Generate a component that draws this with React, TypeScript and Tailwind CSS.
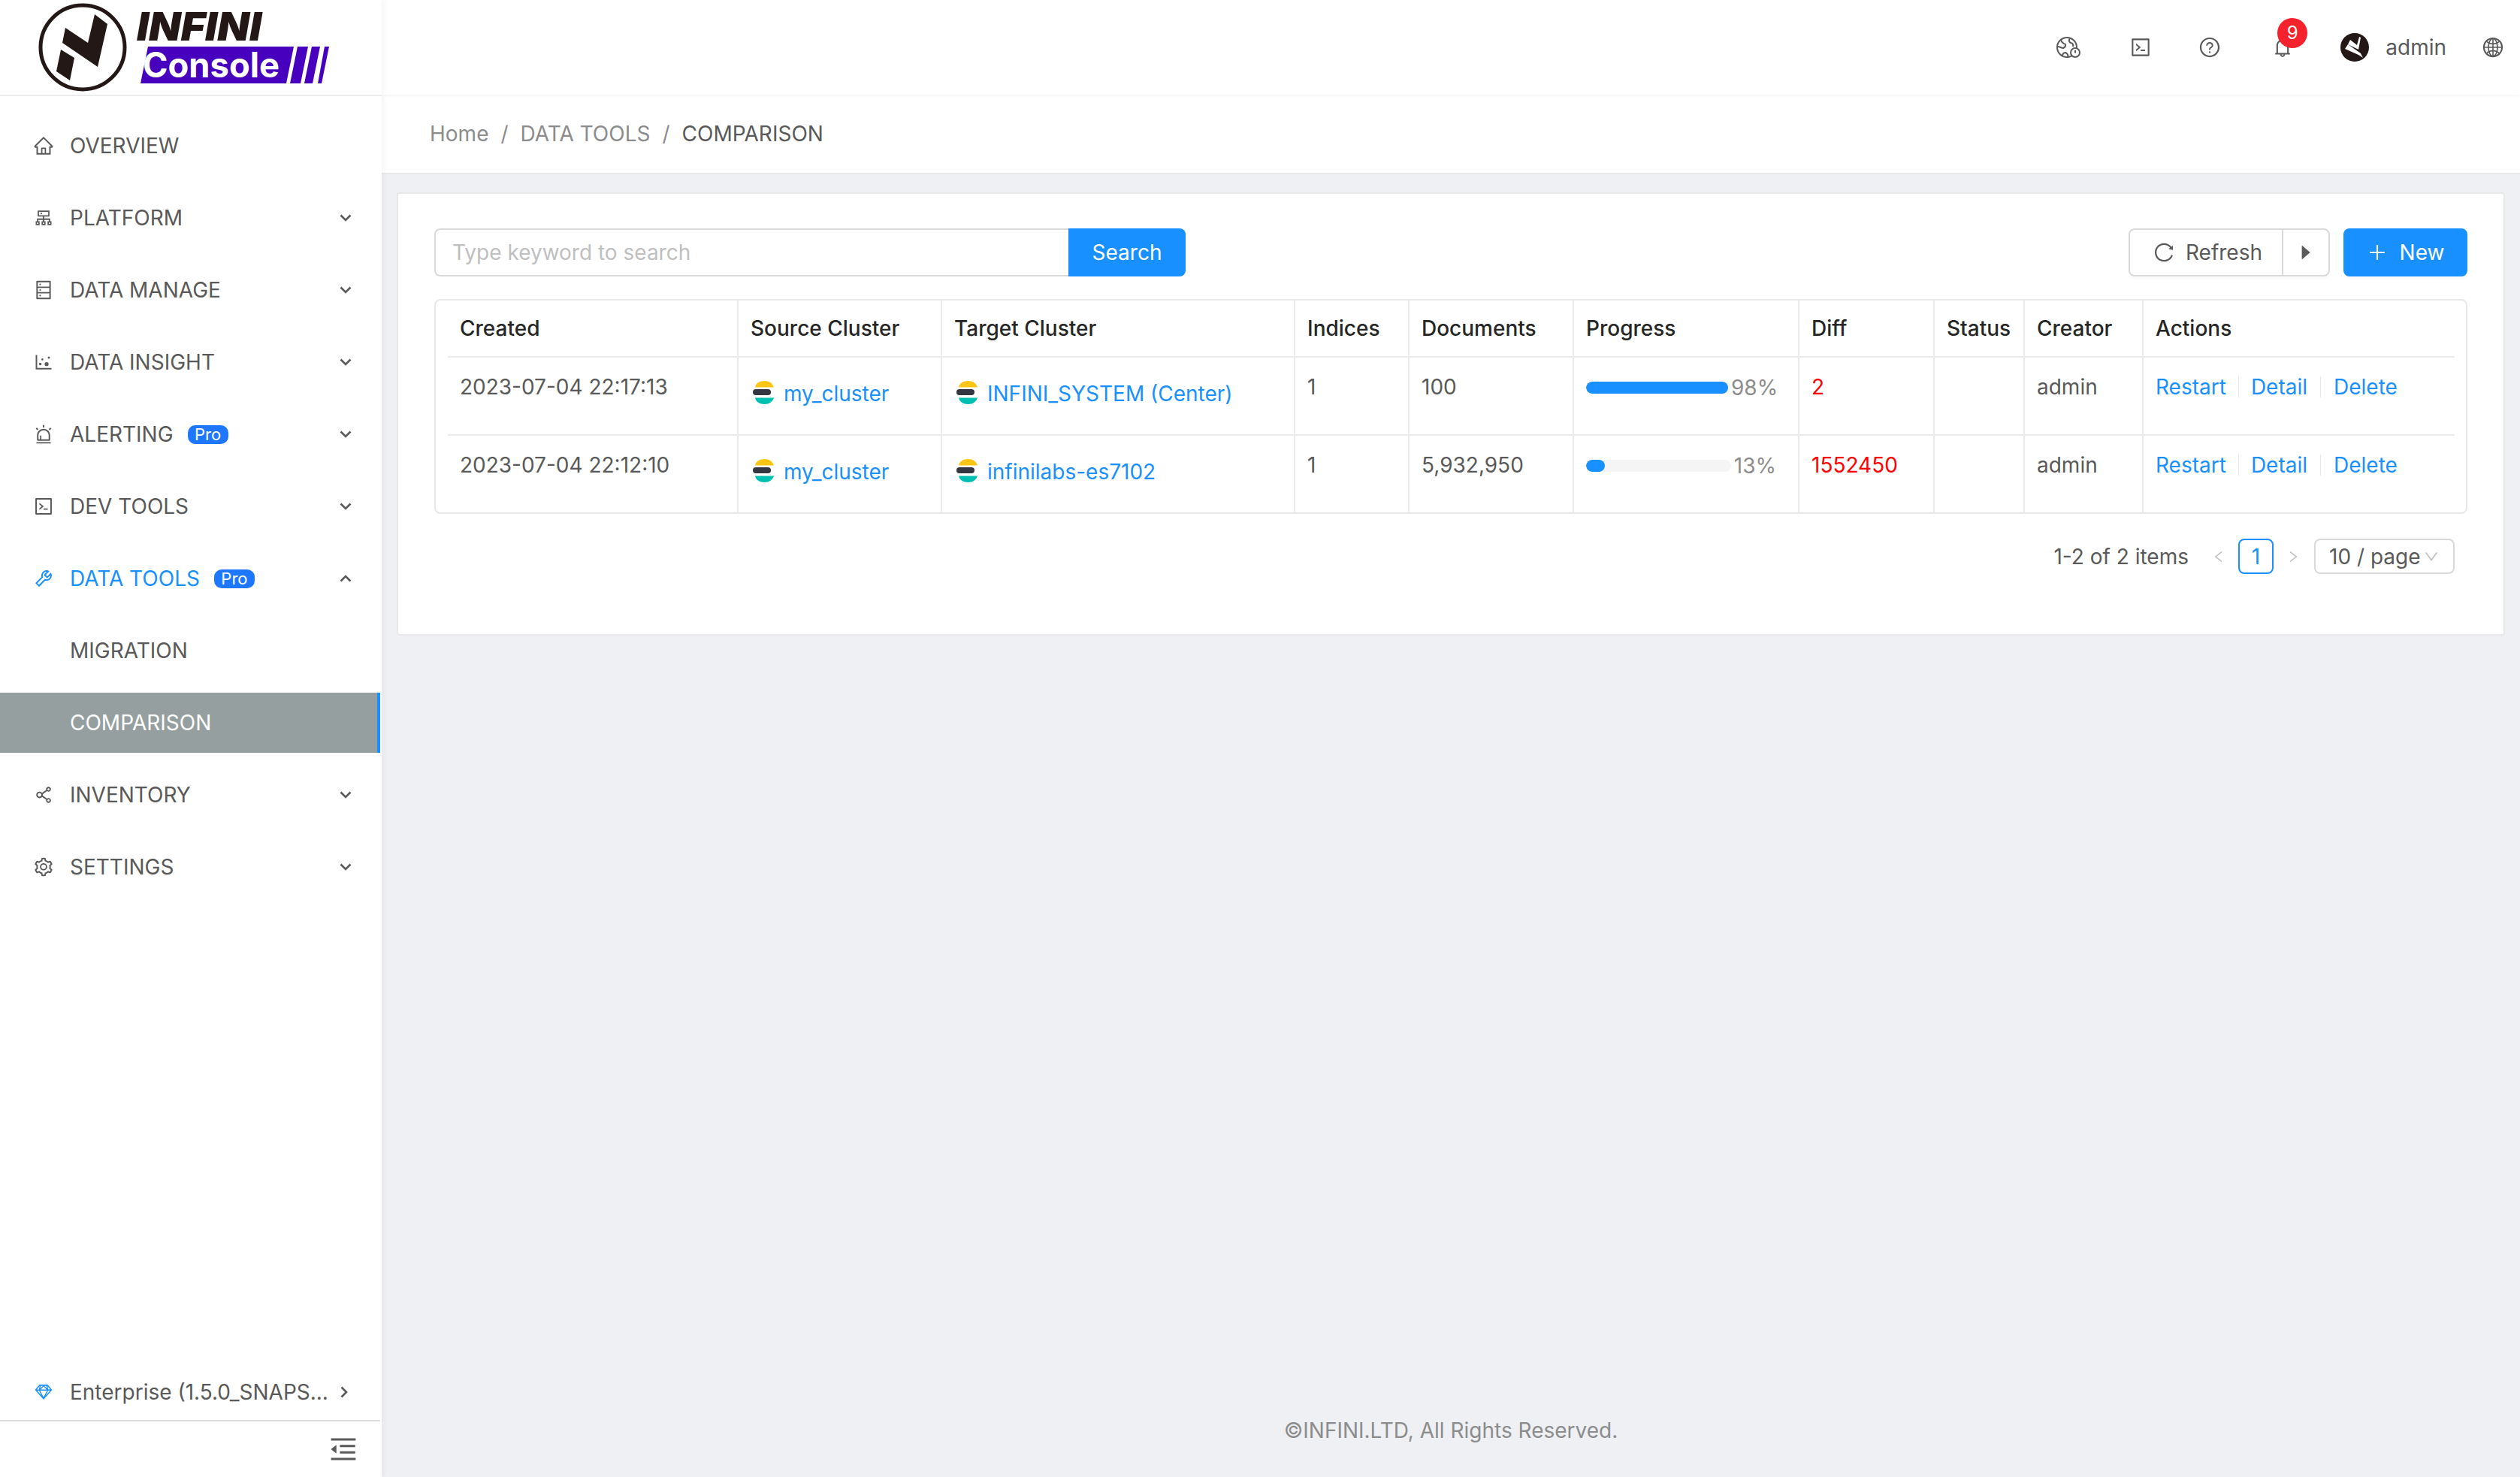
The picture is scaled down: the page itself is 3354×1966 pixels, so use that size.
import type { ReactNode } from "react";
import {
  AiFillCaretRight,
  AiOutlineAlert,
  AiOutlineBell,
  AiOutlineCluster,
  AiOutlineCode,
  AiOutlineDatabase,
  AiOutlineDotChart,
  AiOutlineGlobal,
  AiOutlineHome,
  AiOutlineLeft,
  AiOutlineMenuFold,
  AiOutlinePlus,
  AiOutlineQuestionCircle,
  AiOutlineReload,
  AiOutlineRight,
  AiOutlineSetting,
  AiOutlineShareAlt,
  AiOutlineSketch,
  AiOutlineTool,
  AiOutlineDown,
} from "react-icons/ai";

const Logo = () => (
  <svg width="450" height="126" viewBox="0 0 450 126">
    <circle cx="110" cy="63" r="56" fill="white" stroke="#231815" strokeWidth="5" />
    <polygon points="87,37 117,57 126,19 143,32 130,89 83,57" fill="#231815" />
    <polygon points="81,66 99,77 93,107 75,95" fill="#231815" />
    <text
      x="182"
      y="54"
      fontFamily="Inter, sans-serif"
      fontSize="52"
      fontWeight="900"
      fontStyle="italic"
      fill="#231815"
      textLength="166"
      lengthAdjust="spacingAndGlyphs"
    >
      INFINI
    </text>
    <polygon points="197,62 391,62 381,111 187,111" fill="#4700bd" />
    <polygon points="396,62 410,62 400,111 386,111" fill="#4700bd" />
    <polygon points="415,62 426,62 416,111 405,111" fill="#4700bd" />
    <polygon points="432,62 438,62 428,111 423,111" fill="#4700bd" />
    <text
      x="190"
      y="103"
      fontFamily="Inter, sans-serif"
      fontSize="46"
      fontWeight="700"
      fill="white"
      textLength="182"
      lengthAdjust="spacingAndGlyphs"
    >
      Console
    </text>
  </svg>
);

const Chevron = ({ up }: { up?: boolean }) => (
  <svg width="16" height="10" viewBox="0 0 16 10" className="shrink-0">
    <polyline
      points={up ? "1.5,8.5 8,2 14.5,8.5" : "1.5,1.5 8,8 14.5,1.5"}
      fill="none"
      stroke="currentColor"
      strokeWidth="2.6"
    />
  </svg>
);

const ProBadge = () => (
  <span className="flex h-[25px] w-[54px] items-center justify-center rounded-[10px] bg-[#1e78ff] text-[22px] leading-none text-white">
    Pro
  </span>
);

type Item = { label: string; icon: ReactNode; pro?: boolean };

const topItems: Item[] = [
  { label: "PLATFORM", icon: <AiOutlineCluster /> },
  { label: "DATA MANAGE", icon: <AiOutlineDatabase /> },
  { label: "DATA INSIGHT", icon: <AiOutlineDotChart /> },
  { label: "ALERTING", icon: <AiOutlineAlert />, pro: true },
  { label: "DEV TOOLS", icon: <AiOutlineCode /> },
];

const MenuRow = ({ item }: { item: Item }) => (
  <div className="flex h-20 items-center pl-[44px] pr-[38px] text-[#595959]">
    <span className="flex w-[28px] justify-center text-[28px]">{item.icon}</span>
    <span className="ml-[21px]">{item.label}</span>
    {item.pro && (
      <span className="ml-[19px]">
        <ProBadge />
      </span>
    )}
    <span className="ml-auto">
      <Chevron />
    </span>
  </div>
);

const Sidebar = () => (
  <aside className="z-20 flex h-full w-[508px] shrink-0 flex-col bg-white text-[28px] shadow-[2px_0_8px_rgba(29,35,41,0.05)]">
    <div className="h-[128px] shrink-0 border-b-2 border-[#ebebeb]">
      <Logo />
    </div>
    <nav className="flex flex-1 flex-col gap-4 pt-[26px] pr-[2px]">
      <div className="flex h-20 items-center pl-[44px] text-[#595959]">
        <span className="flex w-[28px] justify-center text-[28px]">
          <AiOutlineHome />
        </span>
        <span className="ml-[21px]">OVERVIEW</span>
      </div>
      {topItems.map((item) => (
        <MenuRow key={item.label} item={item} />
      ))}
      <div className="flex h-20 items-center pl-[44px] pr-[38px] text-[#1890ff]">
        <span className="flex w-[28px] justify-center text-[28px]">
          <AiOutlineTool />
        </span>
        <span className="ml-[21px]">DATA TOOLS</span>
        <span className="ml-[19px]">
          <ProBadge />
        </span>
        <span className="ml-auto text-[#595959]">
          <Chevron up />
        </span>
      </div>
      <div className="flex h-20 items-center pl-[93px] text-[#595959]">MIGRATION</div>
      <div className="flex h-20 items-center border-r-4 border-[#1890ff] bg-[#959f9f] pl-[93px] text-white">
        COMPARISON
      </div>
      <MenuRow item={{ label: "INVENTORY", icon: <AiOutlineShareAlt /> }} />
      <MenuRow item={{ label: "SETTINGS", icon: <AiOutlineSetting /> }} />
    </nav>
    <div className="flex h-[76px] shrink-0 items-center border-b-2 border-[#dcdcdc] pl-[44px] pr-[40px] text-[#595959] mr-[2px]">
      <span className="flex w-[28px] justify-center text-[28px] text-[#1890ff]">
        <AiOutlineSketch />
      </span>
      <span className="ml-[21px] whitespace-nowrap">Enterprise (1.5.0_SNAPS...</span>
      <span className="ml-auto -rotate-90">
        <Chevron />
      </span>
    </div>
    <div className="flex h-[74px] shrink-0 items-center justify-end pr-[30px] text-[42px] text-[#595959]">
      <AiOutlineMenuFold />
    </div>
  </aside>
);

const GlobeClock = () => (
  <svg width="32" height="30" viewBox="0 0 32 30" fill="none" stroke="#595959" strokeWidth="2">
    <circle cx="14" cy="15" r="13" />
    <path d="M6 5c1 4 3 5 6 6 1 3-1 4-3 5-2 0-5-2-7-2M18 3c-2 3-1 5 1 6 2 0 4 2 3 5M8 27c0-3 1-5 4-5 3 1 3 3 4 6" />
    <circle cx="25" cy="22" r="6" fill="white" />
    <path d="M25 19v3.500h0" />
  </svg>
);

const Avatar = () => (
  <svg width="38" height="38" viewBox="0 0 38 38">
    <circle cx="19" cy="19" r="19" fill="#231815" />
    <polygon points="12,11 24,19 27,4 31,7 26,30 9,19" fill="#231815" />
    <polygon points="6,21 10,15 27,27 30,33 24,29" fill="white" />
    <polygon points="10,15 13,9 22,16 25,5 27,6 24,22" fill="white" />
  </svg>
);

const TopBar = () => (
  <header className="relative z-10 flex h-[126px] shrink-0 items-center justify-end bg-white text-[#595959] shadow-[0_1px_4px_rgba(0,21,41,0.06)]">
    <span className="mr-[65px] flex">
      <GlobeClock />
    </span>
    <span className="mr-[62px] text-[30px]">
      <AiOutlineCode />
    </span>
    <span className="mr-[67px] text-[30px]">
      <AiOutlineQuestionCircle />
    </span>
    <span className="relative mr-[62px] text-[30px]">
      <AiOutlineBell />
      <span className="absolute -top-[24px] left-[8px] flex h-[40px] w-[40px] items-center justify-center rounded-full bg-[#f5222d] text-[24px] leading-none text-white">
        9
      </span>
    </span>
    <Avatar />
    <span className="ml-[22px] mr-[47px] text-[28px]">admin</span>
    <span className="mr-[21px] text-[30px]">
      <AiOutlineGlobal />
    </span>
  </header>
);

const Breadcrumb = () => (
  <div className="flex h-[106px] shrink-0 items-center border-b-2 border-[#e8e8e8] bg-white pl-[572px-508px] text-[28px] text-[#8c8c8c]">
    <span className="ml-[64px]">Home</span>
    <span className="mx-[16px]">/</span>
    <span>DATA TOOLS</span>
    <span className="mx-[16px]">/</span>
    <span className="text-[#595959]">COMPARISON</span>
  </div>
);

const ElasticIcon = () => (
  <svg width="28" height="31" viewBox="0 0 28 31" className="shrink-0">
    <path d="M3 8.500C4 3 9 0 15.500 0S26 3 28 8.500Z" fill="#fec514" />
    <rect x="0" y="11" width="24" height="8" rx="4" fill="#343741" />
    <path d="M3 22.500C4 28 9 31 15.500 31S26 28 28 22.500Z" fill="#00bfb3" />
  </svg>
);

const Cluster = ({ name }: { name: string }) => (
  <div className="flex items-center gap-[13px] pl-[3px] pt-[8px] text-[#1890ff]">
    <ElasticIcon />
    <span className="-mt-[2px] relative top-[3px] whitespace-nowrap">{name}</span>
  </div>
);

const Progress = ({ value }: { value: number }) => (
  <div className="flex items-center pt-[1px]">
    <div className="h-4 w-[193px] shrink-0 overflow-hidden rounded-full bg-[#f5f5f5]">
      <div className="h-full rounded-full bg-[#1890ff]" style={{ width: `${value}%` }} />
    </div>
    <span className="ml-auto pr-[13px] text-[#8c8c8c]">{value}%</span>
  </div>
);

const Actions = () => (
  <div className="flex items-center text-[#1890ff]">
    <span>Restart</span>
    <span className="mx-[16px] h-[28px] w-[1px] bg-[#e8e8e8]" />
    <span>Detail</span>
    <span className="mx-[17px] h-[28px] w-[1px] bg-[#e8e8e8]" />
    <span>Delete</span>
  </div>
);

const headers = [
  { label: "Created", col: "w-[387px]" },
  { label: "Source Cluster", col: "w-[271px]" },
  { label: "Target Cluster", col: "w-[470px]" },
  { label: "Indices", col: "w-[152px]" },
  { label: "Documents", col: "w-[219px]" },
  { label: "Progress", col: "w-[300px]" },
  { label: "Diff", col: "w-[180px]" },
  { label: "Status", col: "w-[120px]" },
  { label: "Creator", col: "w-[158px]" },
  { label: "Actions", col: "w-[414px]" },
];

const rows = [
  { created: "2023-07-04 22:17:13", target: "INFINI_SYSTEM (Center)", docs: "100", progress: 98, diff: "2" },
  { created: "2023-07-04 22:12:10", target: "infinilabs-es7102", docs: "5,932,950", progress: 13, diff: "1552450" },
];

const cell = "border-r-2 border-[#ebebeb] px-[16px] pt-[17px] align-top";

const DataTable = () => (
  <div className="h-[286px] rounded-[8px] border-2 border-[#e8e8e8] px-[16px]">
    <table className="w-[2671px] table-fixed border-separate border-spacing-0">
      <colgroup>
        {headers.map((h) => (
          <col key={h.label} className={h.col} />
        ))}
      </colgroup>
      <thead>
        <tr className="h-[76px]">
          {headers.map((h, i) => (
            <th
              key={h.label}
              className={
                i === headers.length - 1
                  ? "whitespace-nowrap border-b-2 border-[#ebebeb] px-[16px] text-left font-medium text-[#262626]"
                  : "whitespace-nowrap border-b-2 border-r-2 border-[#ebebeb] px-[16px] text-left font-medium text-[#262626]"
              }
            >
              {h.label}
            </th>
          ))}
        </tr>
      </thead>
      <tbody className="text-[#595959]">
        {rows.map((r, idx) => (
          <tr key={r.created} className={idx === 0 ? "h-[104px]" : "h-[102px]"}>
            <td className={idx === 0 ? `${cell} border-b-2` : cell}>{r.created}</td>
            <td className={idx === 0 ? `${cell} border-b-2` : cell}>
              <Cluster name="my_cluster" />
            </td>
            <td className={idx === 0 ? `${cell} border-b-2` : cell}>
              <Cluster name={r.target} />
            </td>
            <td className={idx === 0 ? `${cell} border-b-2` : cell}>1</td>
            <td className={idx === 0 ? `${cell} border-b-2` : cell}>{r.docs}</td>
            <td className={idx === 0 ? `${cell} border-b-2` : cell}>
              <Progress value={r.progress} />
            </td>
            <td className={idx === 0 ? `${cell} border-b-2 text-[#ff0000]` : `${cell} text-[#ff0000]`}>{r.diff}</td>
            <td className={idx === 0 ? `${cell} border-b-2` : cell} />
            <td className={idx === 0 ? `${cell} border-b-2` : cell}>admin</td>
            <td
              className={
                idx === 0
                  ? "border-b-2 border-[#ebebeb] px-[16px] pt-[17px] align-top"
                  : "px-[16px] pt-[17px] align-top"
              }
            >
              <Actions />
            </td>
          </tr>
        ))}
      </tbody>
    </table>
  </div>
);

const Pagination = () => (
  <div className="mt-[33px] flex h-[47px] items-center justify-end pr-[17px] text-[#595959]">
    <span>1-2 of 2 items</span>
    <span className="ml-[30px] text-[20px] text-[#bfbfbf]">
      <AiOutlineLeft />
    </span>
    <span className="ml-[16px] flex h-[47px] w-[47px] items-center justify-center rounded-[8px] border-2 border-[#1890ff] text-[#1890ff]">
      1
    </span>
    <span className="ml-[16px] text-[20px] text-[#bfbfbf]">
      <AiOutlineRight />
    </span>
    <div className="ml-[18px] flex h-[47px] w-[187px] items-center justify-between rounded-[8px] border-2 border-[#d9d9d9] px-[18px]">
      <span className="whitespace-nowrap">10 / page</span>
      <span className="text-[22px] text-[#bfbfbf]">
        <AiOutlineDown />
      </span>
    </div>
  </div>
);

const Toolbar = () => (
  <div className="mb-[30px] flex h-16 items-center justify-between">
    <div className="flex h-16">
      <input
        placeholder="Type keyword to search"
        className="h-16 w-[844px] rounded-l-[8px] border-2 border-r-0 border-[#d9d9d9] px-[22px] text-[28px] outline-none placeholder:text-[#bfbfbf]"
      />
      <button className="h-16 w-[156px] rounded-r-[8px] bg-[#1890ff] text-white">Search</button>
    </div>
    <div className="flex h-16 items-center">
      <div className="flex h-16 rounded-[8px] border-2 border-[#d9d9d9] text-[#595959] shadow-[0_4px_0_rgba(0,0,0,0.015)]">
        <div className="flex w-[204px] items-center gap-[14px] border-r-2 border-[#d9d9d9] pl-[30px]">
          <span className="text-[30px]">
            <AiOutlineReload />
          </span>
          Refresh
        </div>
        <div className="flex w-[60px] items-center justify-center text-[26px]">
          <AiFillCaretRight />
        </div>
      </div>
      <button className="ml-[18px] flex h-16 w-[165px] items-center justify-center gap-[16px] rounded-[8px] bg-[#1890ff] text-white shadow-[0_4px_0_rgba(0,0,0,0.015)]">
        <span className="text-[28px]">
          <AiOutlinePlus />
        </span>
        New
      </button>
    </div>
  </div>
);

export default function App() {
  return (
    <div className="flex h-[1966px] w-[3354px] overflow-hidden bg-[#eff0f4] text-[28px] leading-[44px] [font-family:Inter,sans-serif]">
      <Sidebar />
      <main className="flex min-w-0 flex-1 flex-col">
        <TopBar />
        <Breadcrumb />
        <div className="flex-1 px-[20px] pt-[24px]">
          <div className="h-[590px] rounded-[4px] border-2 border-[#e8e8e8] bg-white px-[48px] pt-[46px]">
            <Toolbar />
            <DataTable />
            <Pagination />
          </div>
        </div>
        <footer className="pb-[40px] text-center text-[#8c8c8c]">©INFINI.LTD, All Rights Reserved.</footer>
      </main>
    </div>
  );
}
